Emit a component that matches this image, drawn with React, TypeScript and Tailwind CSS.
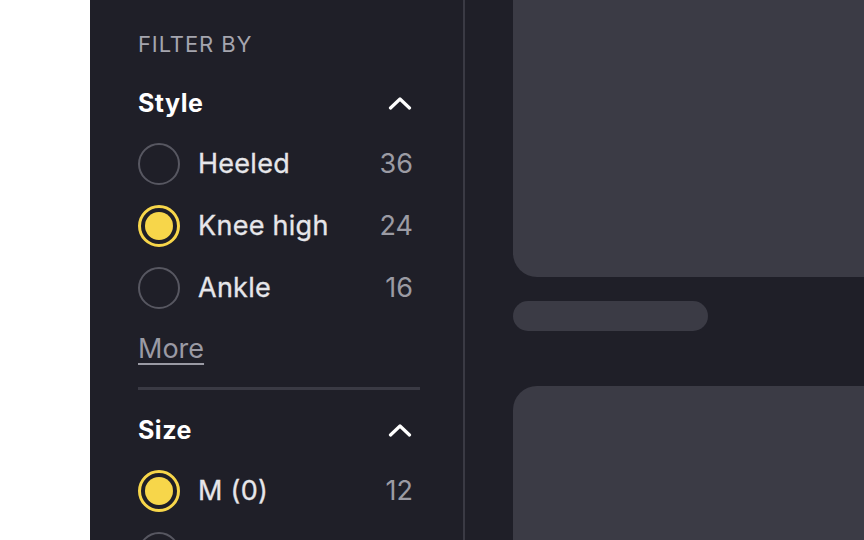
import React from "react";

function Chevron() {
  return (
    <svg width="24" height="14" viewBox="0 0 24 14" fill="none">
      <polyline points="2.5,12 12,3 21.5,12" stroke="#ffffff" strokeWidth="3.2" strokeLinecap="round" strokeLinejoin="round" />
    </svg>
  );
}

function Radio({ checked }: { checked?: boolean }) {
  if (checked) {
    return (
      <div className="w-[42px] h-[42px] shrink-0 rounded-full border-[3px] border-[#f7d64a] flex items-center justify-center">
        <div className="w-[28px] h-[28px] rounded-full bg-[#f7d64a]" />
      </div>
    );
  }
  return <div className="w-[42px] h-[42px] shrink-0 rounded-full border-2 border-[#575761]" />;
}

function Row({ label, count, checked }: { label?: string; count?: number; checked?: boolean }) {
  return (
    <div className="flex shrink-0 items-center h-[42px] pr-[7px]">
      <Radio checked={checked} />
      {label && (
        <span className="ml-[18px] text-[27px] leading-[32px] tracking-[0.01em] text-[#e6e6ea] [-webkit-text-stroke:0.3px_#e6e6ea]">{label}</span>
      )}
      {count !== undefined && (
        <span className="ml-auto text-[27px] leading-[32px] text-[#9b9ba4]">{count}</span>
      )}
    </div>
  );
}

function Heading({ title }: { title: string }) {
  return (
    <div className="flex shrink-0 items-center justify-between h-[28px] pr-[8px]">
      <span className="text-[25px] leading-[28px] tracking-[0.02em] font-bold text-white">{title}</span>
      <Chevron />
    </div>
  );
}

export default function App() {
  return (
    <div
      className="flex w-[864px] h-[540px] overflow-hidden bg-white"
      style={{ fontFamily: "Inter, 'Noto Sans', sans-serif" }}
    >
      <div className="w-[90px] shrink-0 bg-white" />
      <div className="w-[373px] shrink-0 bg-[#1f1f28] pl-[48px] pr-[43px] pt-[30px] flex flex-col overflow-hidden">
        <div className="shrink-0 text-[22px] leading-[28px] tracking-[0.04em] text-[#a5a5ae]">FILTER BY</div>
        <div className="shrink-0 mt-[31px]">
          <Heading title="Style" />
        </div>
        <div className="shrink-0 mt-[26px] flex flex-col gap-[20px]">
          <Row label="Heeled" count={36} />
          <Row label="Knee high" count={24} checked />
          <Row label="Ankle" count={16} />
        </div>
        <div className="shrink-0 mt-[24px] h-[32px] flex">
          <span className="text-[27px] leading-[32px] text-[#9a9aa4] underline decoration-2 underline-offset-[5px]">
            More
          </span>
        </div>
        <div className="shrink-0 mt-[22px] h-[3px] bg-[#3a3a44]" />
        <div className="shrink-0 mt-[26px]">
          <Heading title="Size" />
        </div>
        <div className="shrink-0 mt-[26px] flex flex-col gap-[20px]">
          <Row label="M (0)" count={12} checked />
          <Row />
        </div>
      </div>
      <div className="w-[2px] shrink-0 bg-[#3a3a44]" />
      <div className="flex-1 bg-[#1f1f28] pl-[48px] flex flex-col overflow-hidden">
        <div className="h-[277px] shrink-0 bg-[#3b3b45] rounded-bl-[24px]" />
        <div className="mt-[24px] h-[30px] w-[195px] shrink-0 rounded-full bg-[#3b3b45]" />
        <div className="mt-[55px] h-[200px] shrink-0 bg-[#3b3b45] rounded-tl-[24px]" />
      </div>
    </div>
  );
}
